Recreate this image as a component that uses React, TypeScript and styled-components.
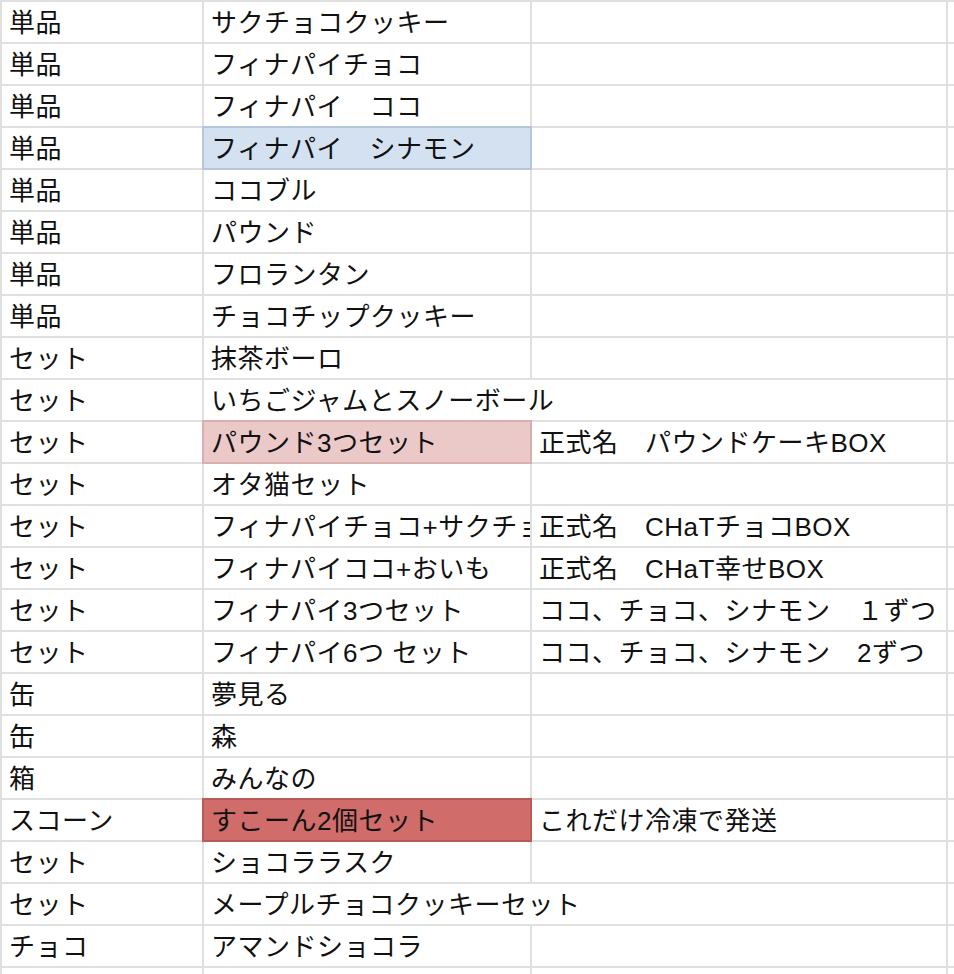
import styled, { createGlobalStyle } from 'styled-components'

// sheet rows: kind, product, note
const rows: { kind: string; name: string; note?: string; tone?: Tone }[] = [
	{ kind: '単品', name: 'サクチョコクッキー' },
	{ kind: '単品', name: 'フィナパイチョコ' },
	{ kind: '単品', name: 'フィナパイ　ココ' },
	{ kind: '単品', name: 'フィナパイ　シナモン', tone: 'blue' },
	{ kind: '単品', name: 'ココブル' },
	{ kind: '単品', name: 'パウンド' },
	{ kind: '単品', name: 'フロランタン' },
	{ kind: '単品', name: 'チョコチップクッキー' },
	{ kind: 'セット', name: '抹茶ボーロ' },
	{ kind: 'セット', name: 'いちごジャムとスノーボール' },
	{ kind: 'セット', name: 'パウンド3つセット', note: '正式名　パウンドケーキBOX', tone: 'pink' },
	{ kind: 'セット', name: 'オタ猫セット' },
	{ kind: 'セット', name: 'フィナパイチョコ+サクチョコ', note: '正式名　CHaTチョコBOX' },
	{ kind: 'セット', name: 'フィナパイココ+おいも', note: '正式名　CHaT幸せBOX' },
	{ kind: 'セット', name: 'フィナパイ3つセット', note: 'ココ、チョコ、シナモン　１ずつ' },
	{ kind: 'セット', name: 'フィナパイ6つ セット', note: 'ココ、チョコ、シナモン　2ずつ' },
	{ kind: '缶', name: '夢見る' },
	{ kind: '缶', name: '森' },
	{ kind: '箱', name: 'みんなの' },
	{ kind: 'スコーン', name: 'すこーん2個セット', note: 'これだけ冷凍で発送', tone: 'red' },
	{ kind: 'セット', name: 'ショコララスク' },
	{ kind: 'セット', name: 'メープルチョコクッキーセット' },
	{ kind: 'チョコ', name: 'アマンドショコラ' },
	{ kind: '', name: '' },
]

type Tone = 'blue' | 'pink' | 'red'

const tones: Record<Tone, { fill: string; edge: string }> = {
	blue: { fill: '#d4e1f1', edge: '#b6c6db' },
	pink: { fill: '#ecc9c9', edge: '#d8aeae' },
	red: { fill: '#d06c69', edge: '#b95a58' },
}

export default function App(): JSX.Element {
	return (
		<>
			<GlobalStyle />
			<Sheet>
				{rows.map((row, i) => {
					// long names spill into the empty note column
					const wide = !row.note && row.name.length > 11
					return (
						<Row key={i}>
							<Cell>{row.kind}</Cell>
							<Cell $span={wide ? 2 : 1} $tone={row.tone}>
								{row.name}
							</Cell>
							{!wide && <Cell>{row.note}</Cell>}
							<Cell />
						</Row>
					)
				})}
			</Sheet>
		</>
	)
}

const GlobalStyle = createGlobalStyle`
	html, body {
		margin: 0;
		overflow: hidden;
		background: #fff;
	}
	body {
		font-family: "Liberation Sans", "Noto Sans CJK JP", sans-serif;
		color: #111;
	}
`
const Sheet = styled.div`
	display: grid;
	grid-template-columns: 200px 326px 414px 1fr;
	gap: 2px;
	padding: 2px 0 0 2px;
	background: #e0e0e0;
`
const Row = styled.div`
	display: contents;
`
const Cell = styled.div<{ $span?: number; $tone?: Tone }>`
	grid-column: span ${({ $span }) => $span ?? 1};
	height: 40px;
	padding: 0 0 0 7px;
	font-size: 26px;
	letter-spacing: 0.5px;
	line-height: 42px;
	white-space: nowrap;
	overflow: hidden;
	background: ${({ $tone }) => ($tone ? tones[$tone].fill : '#fff')};
	box-shadow: ${({ $tone }) => ($tone ? `0 0 0 2px ${tones[$tone].edge}` : 'none')};
`
